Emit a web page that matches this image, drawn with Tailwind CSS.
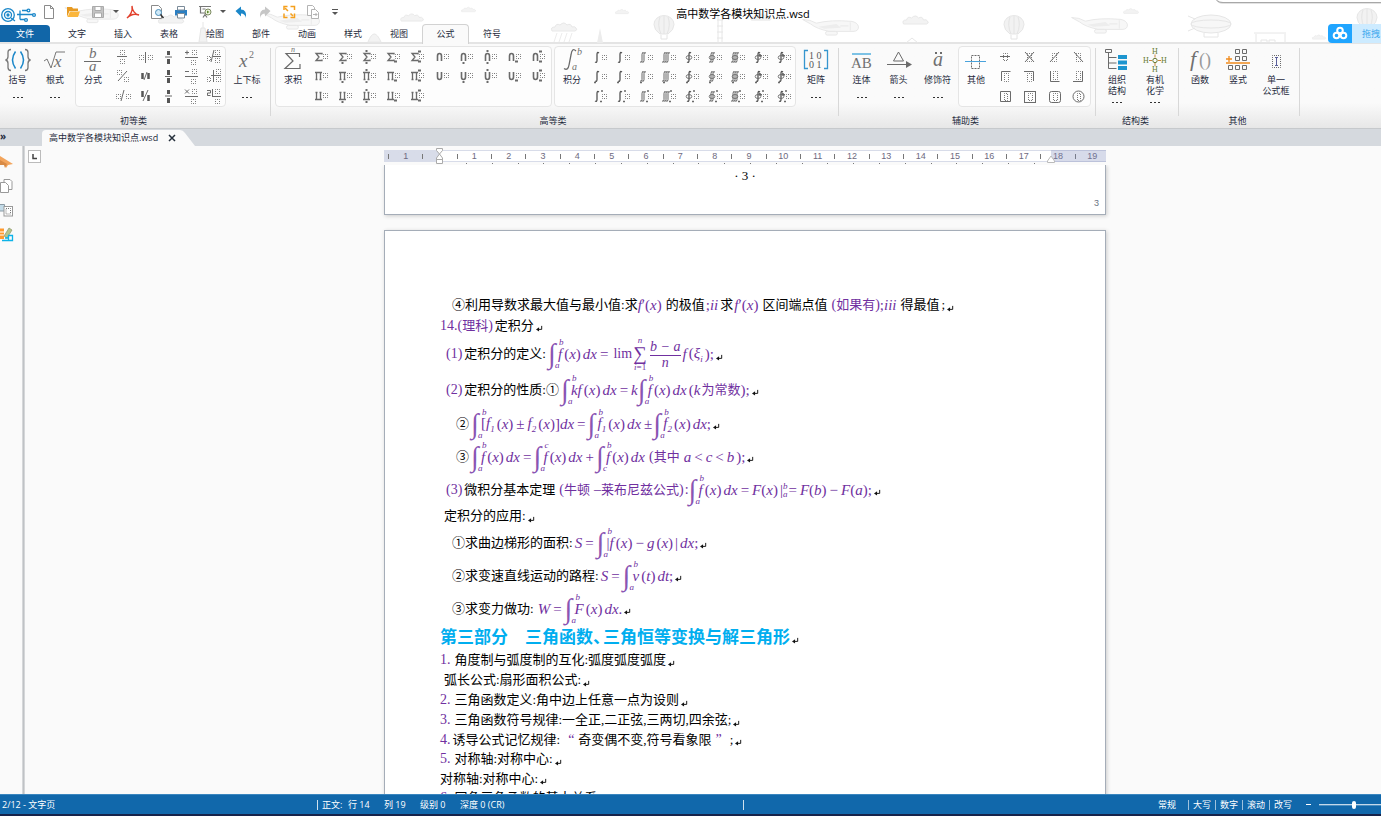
<!DOCTYPE html>
<html lang="zh-CN">
<head>
<meta charset="utf-8">
<title>高中数学各模块知识点.wsd</title>
<script src="https://cdn.jsdelivr.net/npm/@tailwindcss/browser@4"></script>
</head>
<body class="flex h-screen flex-col overflow-hidden bg-[#fafafa] font-['Open_Sans','Noto_Sans_CJK_SC',sans-serif] text-[9px] leading-3 text-[#1f2b3d]">

<svg class="hidden" aria-hidden="true">
  <symbol id="cloud" viewBox="0 0 30 10"><path d="M3 9h23q3-1 1-3q-1-2-4-1q-1-4-5-2q-3-4-7 0q-4-2-5 2q-5 0-3 4z" fill="#f3f3f3" stroke="#e8e8e8"/></symbol>
  <symbol id="plane" viewBox="0 0 64 24"><path d="M1 6l8 1 7 3q16-4 38-2q7 1 8 6q0 5-6 5H30q-14-3-20-8z" fill="#f7f7f7" stroke="#e6e6e6"/><path d="M18 14l20-3 5 4-18 1z" fill="#ededed"/><rect x="26" y="19" width="13" height="4" rx="2" fill="#f7f7f7" stroke="#e6e6e6"/><path d="M53 9v9M42 13h9" stroke="#e8e8e8"/></symbol>
  <symbol id="balloon" viewBox="0 0 22 28"><path d="M7 19Q1 15 1 9.500A10 9 0 0 1 21 9.500Q21 15 15 19z" fill="#f2f2f2" stroke="#e6e6e6"/><path d="M11 1v18M7 2q-3 8 1 17M15 2q3 8-1 17M8 20v4h6v-4" fill="none" stroke="#e4e4e4"/></symbol>
  <symbol id="ret" viewBox="0 0 8 8"><path d="M6.500 1v4H2" fill="none" stroke="#111" stroke-width="1.100"/><path d="M0 5l3.500-2.500v5z" fill="#111"/></symbol>
</svg>

<header class="relative shrink-0 bg-white">
  <svg class="pointer-events-none absolute inset-0 h-[43px] w-full" aria-hidden="true">
    <use href="#plane" x="64" y="2" width="56" height="22"/><use href="#cloud" x="154" y="14" width="34" height="10"/><use href="#plane" x="262" y="8" width="60" height="22"/>
    <path d="M199 42l2-14h4l2 14zM203 22v6" fill="#f3f3f3" stroke="#e6e6e6"/>
    <use href="#cloud" x="396" y="13" width="32" height="9"/><use href="#cloud" x="460" y="5" width="17" height="9"/>
    <path d="M368 42q6-16 13 0z" fill="#f3f3f3" stroke="#e8e8e8"/>
    <use href="#cloud" x="548" y="22" width="32" height="10"/><path d="M557 33l-3 9m8-9l-3 9m8-9l-3 9m8-9l-3 9" stroke="#ececec"/><path d="M600 28l3 15h-6z" fill="#ececec"/>
    <use href="#cloud" x="614" y="7" width="16" height="9"/><use href="#balloon" x="653" y="15" width="22" height="28"/>
    <path d="M718 15v28M722 15v28M717 20h6m-6 6h6m-6 6h6m-6 6h6" stroke="#e6e6e6"/><use href="#cloud" x="744" y="13" width="34" height="8"/>
    <use href="#plane" x="799" y="14" width="64" height="22"/><use href="#cloud" x="899" y="15" width="33" height="10"/><path d="M906 43l6-5 6 5" fill="none" stroke="#e6e6e6"/>
    <use href="#balloon" x="1003" y="15" width="22" height="28"/><use href="#plane" x="1068" y="12" width="64" height="22"/><use href="#cloud" x="1122" y="7" width="18" height="8"/>
    <ellipse cx="1211" cy="24" rx="20" ry="9" fill="#f7f7f7" stroke="#e6e6e6"/><ellipse cx="1211" cy="24" rx="20" ry="4" fill="none" stroke="#e6e6e6"/><path d="M1204 33v4h14v-4M1188 16l7 3M1188 31l7-3" stroke="#e6e6e6" fill="none"/>
    <path d="M1254 33h32M1256 34v9M1285 34v9M1261 40h6v3h-6zM1269 40h6v3h-6z" fill="none" stroke="#e6e6e6"/><use href="#cloud" x="1311" y="33" width="16" height="8"/><use href="#balloon" x="1356" y="8" width="22" height="28"/>
    <path d="M1217 0q1 4 6 4h200v-4z" fill="#e2e2e2"/><path d="M1216 0q2 3 6 3h200v-3z" fill="#a8a8a8"/><path d="M1217 0q2 2 6 2h200v-2z" fill="#fff"/>
  </svg>

  <div class="relative flex h-6 items-center">
    <div id="quick" class="flex w-[346px] items-center"></div>
    <h1 class="mr-[241px] flex-1 pt-1 text-center text-[11px] leading-4 text-black">高中数学各模块知识点.wsd</h1>
  </div>

  <nav class="relative flex h-[18px] items-end">
    <button class="mr-1 h-[17px] w-[50px] rounded-tr-sm bg-[#1166a8] text-white">文件</button>
    <button class="h-[17px] w-[46px]">文字</button>
    <button class="h-[17px] w-[46px]">插入</button>
    <button class="h-[17px] w-[46px]">表格</button>
    <button class="h-[17px] w-[46px]">绘图</button>
    <button class="h-[17px] w-[46px]">部件</button>
    <button class="h-[17px] w-[46px]">动画</button>
    <button class="h-[17px] w-[46px]">样式</button>
    <button class="h-[17px] w-[46px]">视图</button>
    <button class="relative -mb-[2px] h-5 w-[47px] rounded-t-sm border border-b-0 border-[#d2d2d2] bg-[#fafafa] pb-[2px]">公式</button>
    <button class="h-[17px] w-[46px]">符号</button>
    <button class="-mb-px ml-auto flex h-[19px] w-[53px] items-center overflow-hidden rounded-l-sm bg-[#cdebff] text-[#3fa9ee]">
      <svg class="h-[19px] w-6 shrink-0 bg-[#20a5ff]" viewBox="0 0 24 19" fill="none" stroke="#fff" stroke-width="2"><circle cx="12" cy="6.500" r="2.800"/><circle cx="8.500" cy="11.500" r="2.800"/><circle cx="15.500" cy="11.500" r="2.800"/></svg>
      <span class="ml-2.5 whitespace-nowrap">拖拽</span>
    </button>
  </nav>
</header>

<section id="ribbon" aria-label="公式" class="flex h-[86px] shrink-0 overflow-hidden border-t-2 border-[#e4e4e4] bg-linear-to-b from-[#fafafa] from-70% to-[#e7e7e7]"></section>

<div class="flex h-[18px] shrink-0 items-end border-t border-[#c6c9cc] bg-[#d5d9de]">
  <button class="mb-[5px] w-[42px] text-left text-[10px] leading-[10px] font-bold" aria-label="展开">»</button>
  <div class="flex h-4 items-center rounded-tl-sm bg-[#fafafa] pl-[7px]">
    <span>高中数学各模块知识点.wsd</span>
    <button class="ml-2.5 mr-1" aria-label="关闭"><svg class="size-2" viewBox="0 0 8 8" stroke="#26303c" stroke-width="1.500"><path d="M1 1l6 6M7 1l-6 6"/></svg></button>
  </div>
  <svg class="h-4 w-4" viewBox="0 0 16 16"><path d="M0 0q3 0 5 3l10 13H0z" fill="#fafafa"/></svg>
</div>

<main class="flex min-h-0 flex-1">
  <aside class="flex w-[22px] shrink-0 flex-col items-start gap-[8px] pt-2" aria-label="面板">
    <button aria-label="导航"><svg class="h-4 w-3.5" viewBox="0 0 14 16"><path d="M0 2l13 8-5 1-2 3-1-3H0z" fill="#f2a45c"/><path d="M0 6l7 4-2 4-1-3H0" fill="#d88a45"/></svg></button>
    <button aria-label="页面"><svg class="h-4 w-3.5" viewBox="0 0 14 16" fill="#fff" stroke="#999"><path d="M4 1.500h6l2 2v8H4z"/><path d="M.5 4.500h5l3 3v7h-8z"/></svg></button>
    <button aria-label="对象"><svg class="h-4 w-3.5" viewBox="0 0 14 16"><path d="M0 2.500h4.500V9H0" fill="#c3dbe8" stroke="#8a9aa5"/><rect x="4" y="4.500" width="8.500" height="9.500" fill="#fff" stroke="#999"/><rect x="6" y="6.500" width="4.500" height="5.500" fill="none" stroke="#777" stroke-dasharray="1 1"/></svg></button>
    <button aria-label="素材"><svg class="h-4 w-3.5" viewBox="0 0 14 16"><path d="M0 2.500h4V13H0" fill="#ff9a2e"/><path d="M0 6h4M0 9h4" stroke="#fff"/><path d="M4 10l5-8 3 2-5 8z" fill="#b8c48c" stroke="#8d9a6a" stroke-width=".7"/><path d="M2 14.500h10.500v-5h-4v5M5 12h3" fill="none" stroke="#0db3e8" stroke-width="1.300"/></svg></button>
  </aside>
  <div class="w-[3px] shrink-0 border-x border-[#d5d7d9] bg-[#bfc2c5]"></div>

  <div class="flex min-w-0 flex-1 flex-col">
    <div class="relative flex h-[19px] shrink-0 justify-center pl-[84px]">
      <button class="absolute left-[3px] top-1 size-[13px] border border-[#bbb] bg-white" aria-label="制表位"><svg viewBox="0 0 11 11"><path d="M4 3v4.500h4" fill="none" stroke="#444" stroke-width="1.500"/></svg></button>
      <div class="relative w-[722px] pt-1">
        <div class="flex h-[12px] overflow-hidden bg-linear-to-r from-[#d8dce9] from-[55px] to-white to-[55px]">
          <div class="flex h-full w-full border-y border-[#d8dce9]">
            <div id="ruler" class="ml-1 grid w-[721px] shrink-0 grid-cols-21 font-['Liberation_Sans',sans-serif] text-[9px] text-[#6e6a80]"></div>
          </div>
        </div>
        <div class="absolute right-0 top-1 h-[12px] w-[55px] bg-[#7c87b8]/30"></div>
        <svg class="absolute left-[51px] top-[2px] h-[17px] w-[10px]" viewBox="0 0 10 17" fill="#fff" stroke="#aaa"><path d="M1.500 .500h6v2L4.500 6l-3-3.500zM4.500 6l3 4v5.500h-6V10zM1.500 11.500h6"/></svg>
        <svg class="absolute right-[51px] top-[9px] size-2" viewBox="0 0 8 8" fill="#fff" stroke="#bbb"><path d="M.5 6L4 1l3.500 5v1.500h-7z"/></svg>
        <div id="dots" class="ml-[82px] mt-px flex w-[569px] justify-between"></div>
      </div>
    </div>

    <div class="flex min-h-0 flex-1 flex-col items-center overflow-hidden pl-[84px]">
      <div class="flex h-[50px] w-[722px] shrink-0 flex-col border border-t-0 border-[#a5adb8] bg-white shadow-[1px_1px_4px_#00000030]">
        <div class="pt-[3px] text-center font-['Liberation_Serif',serif] text-[13px] leading-4 text-black">· 3 ·</div>
        <div class="mt-[13px] pr-1.5 text-right font-['Liberation_Sans',sans-serif] text-[9px] text-gray-500">3</div>
      </div>
      <article id="page" class="mt-[15px] flex w-[722px] shrink-0 flex-col border border-[#a5adb8] bg-white px-[55px] pt-16 pb-16 font-['Liberation_Serif','Noto_Sans_CJK_SC',serif] text-[14px] leading-5 whitespace-nowrap text-black shadow-[1px_1px_4px_#00000030]"></article>
    </div>
  </div>
</main>

<footer class="flex h-[22px] shrink-0 items-center overflow-hidden border-t border-b-2 border-t-[#3a86bf] border-b-[#16234a] bg-[#1168ab] pl-0.5 whitespace-nowrap text-white">
  <span class="w-[315px]">2/12 - 文字页</span>
  <span class="mr-1 h-2.5 w-px bg-white/80"></span>
  <span class="w-[26px]">正文:</span>
  <span class="w-9">行 14</span>
  <span class="w-9">列 19</span>
  <span class="w-10">级别 0</span>
  <span>深度 0 (CR)</span>
  <span class="ml-[239px] h-2.5 w-px bg-white/80"></span>
  <button class="ml-auto mr-3">常规</button>
  <button class="mr-1 border-l border-white/60 pl-1 leading-[10px]">大写</button>
  <button class="mr-1 border-l border-white/60 pl-1 leading-[10px]">数字</button>
  <button class="mr-1 border-l border-white/60 pl-1 leading-[10px]">滚动</button>
  <button class="border-l border-white/60 pl-1 leading-[10px]">改写</button>
  <button class="ml-3.5 h-px w-[5px] bg-white" aria-label="缩小"></button>
  <input type="range" aria-label="缩放" class="ml-2 -mr-2 h-2 w-[70px] appearance-none bg-linear-to-b from-transparent from-[3px] via-white via-[3px] to-transparent to-[5px] [&::-webkit-slider-thumb]:h-2 [&::-webkit-slider-thumb]:w-1 [&::-webkit-slider-thumb]:appearance-none [&::-webkit-slider-thumb]:rounded-full [&::-webkit-slider-thumb]:bg-white">
</footer>

<script>
const svg = (w, h, body) => `<svg width="${w}" height="${h}" viewBox="0 0 ${w} ${h}" fill="none" stroke="#6b6b6b" overflow="visible">${body}</svg>`;

/* ---------- quick access ---------- */
const quick = [
  ['标志', 38, svg(38, 18, '<g stroke="#1b87c9" stroke-width="1.300"><circle cx="8" cy="9" r="6.300"/><circle cx="8" cy="9" r="3.500"/><circle cx="8" cy="9" r="1" fill="#1b87c9"/><path d="M11 12l4 3M17 8.500h16M22 4.500h5M20 4.500v9M20 13.500h5"/><circle cx="28.500" cy="4.500" r="1.400"/><circle cx="34" cy="9" r="1.400"/><circle cx="26" cy="14" r="1.400"/></g>')],
  ['新建', 22, svg(16, 16, '<path d="M3.500 1.500h6l3 3v10h-9zM9.500 1.500v3h3" fill="#fff" stroke="#8b8b8b"/>')],
  ['打开', 26, svg(16, 16, '<path d="M2 3h5l1 1.500h5V7H4.500L2 13z" fill="#e79a22" stroke="none"/><path d="M5 7.500h10L13 13H2.500z" fill="#fbb63c" stroke="none"/>')],
  ['保存', 24, svg(16, 16, '<path d="M2.500 2.500h11v11h-11z" fill="#c4c4c4" stroke="#aaa"/><path d="M5 2.500h6v4H5zM4.500 9h7v4.500h-7z" fill="#fff" stroke="#aaa"/>')],
  ['保存选项', 12, svg(8, 8, '<path d="M1 2h6L4 5z" fill="#555" stroke="none"/>')],
  ['导出PDF', 22, svg(16, 16, '<path d="M2 14C5 12 8 7 7 2C7 6 10 10.500 14 11C10 9.500 6 10 2 14z" stroke="#e2402c" stroke-width="1.400"/>')],
  ['预览', 26, svg(16, 16, '<path d="M2.500 1.500h7l3 3v10h-10z" fill="#fff" stroke="#8b8b8b"/><circle cx="9.500" cy="8.500" r="3" fill="#cfe9f8" stroke="#4a8db8"/><path d="M11.500 10.500l3 3.500" stroke="#333" stroke-width="1.500"/>')],
  ['打印', 22, svg(16, 16, '<path d="M2 6h12v5.500H2z" fill="#2b7fc2" stroke="none"/><path d="M4.500 2.500h7V6h-7zM4.500 9.500h7v4.500h-7z" fill="#fff" stroke="#7b8b99"/>')],
  ['放映', 26, svg(16, 16, '<path d="M2 2.500h12M3.500 3v6h6M6 13.500l2-3 2 3M5.500 5h3" stroke="#777" stroke-width="1.200"/><circle cx="11" cy="8" r="3" fill="#eef5e0" stroke="#7d8b62"/><path d="M10 6.500l2.500 1.500-2.500 1.500z" fill="#5f8a2f" stroke="none"/>')],
  ['放映选项', 10, svg(8, 8, '<path d="M1 2h6L4 5z" fill="#555" stroke="none"/>')],
  ['撤销', 26, svg(16, 16, '<path d="M2.500 7l5.500-4.500v3q6 0 5 8.500q-1-4.500-5-4.500v3z" fill="#1b87c9" stroke="none"/>')],
  ['重做', 22, svg(16, 16, '<path d="M13.500 7L8 2.500v3q-6 0-5 8.500q1-4.500 5-4.500v3z" fill="#c6c6c6" stroke="none"/>')],
  ['全屏', 26, svg(16, 16, '<path d="M3 6V2.500h3.500M9.500 2.500h4V6M13.500 9.500v4h-4M6.500 13.500H3V9.500" stroke="#f5a01d" stroke-width="1.500"/><path d="M4 4l3 3M12 12L9.500 9.500" stroke="#f5a01d" stroke-width="1.500"/>')],
  ['复制', 22, svg(16, 16, '<path d="M2.500 1.500h5l2 2v8h-7z" fill="#fff" stroke="#b3b3b3"/><path d="M6.500 5.500h4l3 3v6h-7z" fill="#fff" stroke="#b3b3b3"/><path d="M8 10.500h4M10.500 9l1.500 1.500-1.500 1.500" stroke="#b3b3b3"/>')],
  ['更多', 22, svg(8, 8, '<path d="M1 1.500h6" stroke="#555"/><path d="M1 4h6L4 7z" fill="#555" stroke="none"/>')],
];
document.getElementById('quick').innerHTML = quick.map(([n, w, s], i) =>
  `<button aria-label="${n}" class="${i ? 'flex h-4 shrink-0 items-center justify-center' : 'mt-1.5 flex shrink-0 items-center'}" style="width:${w}px">${s}</button>`).join('');

/* ---------- ribbon ---------- */
const box = (x, y, w = 4, h = 4) => `<rect x="${x}.5" y="${y}.5" width="${w}" height="${h}" stroke="#777" stroke-dasharray="1 1" stroke-dashoffset=".5"/>`;
const small = b => svg(18, 16, b);
const glyph = {
  sum: '<path d="M9 5.500V4.500H3L6 8l-3 3.500h6v-1" stroke-width="1.300"/>',
  prod: '<path d="M2 4.500h7M2.500 11.500h2M6.500 11.500h2M3.500 4v7M7.500 4v7" stroke-width="1.300"/>',
  coprod: '<path d="M2 11.500h7M2.500 4.500h2M6.500 4.500h2M3.500 4v7M7.500 4v7" stroke-width="1.300"/>',
  cap: '<path d="M3.500 12V7q0-2.500 2-2.500t2 2.500v5" stroke-width="1.600"/>',
  cup: '<path d="M3.500 4v5q0 2.500 2 2.500t2-2.500V4" stroke-width="1.600"/>',
};
const big = (g, v) => small(glyph[g] + box(10, 5, 4, 4) +
  (v === 1 || v === 2 ? '<path d="M4.500 14h2" stroke-width="2"/>' : '') + (v === 2 ? '<path d="M4.500 2h2" stroke-width="2"/>' : '') +
  (v >= 3 ? '<path d="M9 12.500h3" stroke-width="2"/>' : '') + (v === 4 ? '<path d="M9 2.500h3" stroke-width="2"/>' : ''));
const integral = (n, ring, v) => {
  let s = '';
  for (let i = 0; i < n; i++) s += `<path d="M${9 + i * 2 - n} 4q-2-1.500-2 1.500v6q0 2.500-2 1.500" stroke="#555" stroke-width="${n > 1 ? 0.9 : 1.3}"/>`;
  if (ring) s += '<ellipse cx="6" cy="8.500" rx="2.800" ry="2" stroke-width=".9"/>';
  if (ring > 1) s += '<path d="M7.500 5l2.500 2h-3z" fill="#555"/>';
  return small(s + box(11, 6, 4, 4) + (v === 1 ? '<path d="M3 14.500h2" stroke-width="1.500"/>' : '') + (v === 2 ? '<path d="M9 13.500h2M10 3h2" stroke-width="1.300"/>' : ''));
};
const frac = [
  small(box(7, 1, 4, 4) + box(7, 10, 4, 4) + '<path d="M4 7.500h10"/>'), small(box(3, 6, 4, 4) + box(12, 6, 4, 4) + '<path d="M9.500 3v11"/>'),
  small('<path d="M9.500 2v4M9.500 10v5" stroke="#555" stroke-width="3"/><path d="M6 8h7"/>'),
  small('<path d="M3 3.500h4M5 1.500v4M3 8.500h13"/>' + box(10, 1, 4, 4) + box(9, 11, 4, 4)), small(box(2, 7, 3, 4) + box(10, 1, 4, 4) + box(10, 9, 4, 4) + '<path d="M6 13l3-12M8 7.500h8"/>'),
  small(box(4, 2, 4, 4) + box(11, 9, 4, 4) + '<path d="M5 13L14 3"/>'), small('<path d="M6.500 5v6M12.500 5v6" stroke="#555" stroke-width="2.500"/><path d="M8 12l3-8"/>'),
  small('<path d="M9.500 2v5M9.500 10v5" stroke="#555" stroke-width="3"/><path d="M6 8.500h7"/>'),
  small('<path d="M3 3.500h4M3 8.500h13"/>' + box(10, 1, 4, 4) + box(9, 11, 4, 4)), small(box(2, 9, 3, 4) + box(11, 1, 4, 4) + box(11, 9, 4, 4) + '<path d="M8.500 2v12M6 7.500h10"/>'),
  small(box(3, 6, 4, 4) + box(13, 6, 4, 4) + '<path d="M8 13l3-11"/>'), small('<path d="M6.500 3v6M12.500 7v6" stroke="#555" stroke-width="2.500"/><path d="M7 13l5-11"/>'),
  small('<path d="M9.500 2v4M9.500 10v5" stroke="#555" stroke-width="3"/><path d="M6 8h7"/>'),
  small('<path d="M3 1.500l4 4M7 1.500l-4 4M3 8.500h13"/>' + box(10, 1, 4, 4) + box(9, 11, 4, 4)), small('<path d="M2 2.500h3.500v2.500H2.500V7.500h3M7.500 1v7M7 8.500h9"/>' + box(10, 1, 4, 4) + box(10, 11, 4, 4)),
];
const seq = (n, f) => Array.from({ length: n }, (_, i) => f(i));
const bigOps = [...seq(5, i => big('sum', i)), ...seq(5, i => big('cap', i)), ...seq(5, i => big('prod', i)), ...seq(5, i => big('cup', i)), ...seq(5, i => big('coprod', i))];
const ints = seq(3, v => [[1, 0], [1, 0], [2, 0], [3, 0], [1, 1], [2, 1], [3, 1], [1, 2], [1, 2]].map(([n, r]) => integral(n, r, v))).flat();
const others = [
  small(box(7, 4, 4, 7) + '<path d="M4 7.500h10"/>'), small(box(7, 4, 4, 8) + '<path d="M5 3l9 10M14 3L5 13"/>'), small(box(7, 4, 4, 8) + '<path d="M14 3L5 13"/>'), small(box(7, 4, 4, 8) + '<path d="M5 3l9 10"/>'),
  small(box(8, 5, 4, 8) + '<path d="M5.500 13V3.500h9"/>'), small(box(7, 5, 4, 8) + '<path d="M4 3.500h9.500V13"/>'), small(box(8, 3, 4, 8) + '<path d="M5.500 3v10.500h9"/>'), small(box(7, 3, 4, 8) + '<path d="M4 13.500h9.500V3"/>'),
  small(box(8, 5, 3, 7) + '<path d="M4.500 3.500h10v10h-10z"/>'), small(box(8, 5, 4, 7) + '<rect x="4.500" y="3.500" width="11" height="11"/>'), small(box(8, 5, 4, 7) + '<rect x="4.500" y="3.500" width="11" height="11" rx="2"/>'), small(box(8, 5, 3, 7) + '<circle cx="9.500" cy="8.500" r="5.500"/>'),
];
const ser = (x, y, s, t, c = '#707070', extra = 'font-style="italic"') => `<text x="${x}" y="${y}" font-family="Liberation Serif" font-size="${s}" fill="${c}" stroke="none" ${extra}>${t}</text>`;
const up = '';
const icons = {
  '括号': svg(26, 28, '<path d="M6 3.500q-3 0-3 3v4q0 3-2.500 3.500q2.500.5 2.500 3.500v4q0 3 3 3M20 3.500q3 0 3 3v4q0 3 2.500 3.500q-2.500.5-2.500 3.500v4q0 3-3 3" stroke="#777" stroke-width="1.300"/><path d="M10.500 5.500q-6 8.500 0 17M15.500 5.500q6 8.500 0 17" stroke="#1b87c9" stroke-width="1.500"/>'),
  '根式': svg(26, 28, '<path d="M2 15l3-2 4 9 5-16h9" stroke="#777"/>' + ser(12, 21, 17, 'x')),
  '分式': svg(26, 28, ser(9, 12, 15, 'b') + '<path d="M4 15.500h17"/>' + ser(9, 25, 15, 'a')),
  '上下标': svg(26, 28, ser(5, 21, 19, 'x') + ser(15, 12, 10, '2', '#707070', up)),
  '求积': svg(26, 28, '<path d="M19.500 11V7.500H6l7 7.500-8 7.500h15V18" stroke-width="1.200"/>' + ser(11, 6, 8, 'n')),
  '积分': svg(26, 28, '<path d="M17 5q-4-4-5 4l-2 10q-1 6-5 3.500" stroke-width="1.300"/>' + ser(18, 9, 10, 'b') + ser(13, 24, 10, 'a')),
  '矩阵': svg(26, 28, '<path d="M5 4.500H1.500v18H5M21 4.500h3.500v18H21" stroke="#3596cf" stroke-width="1.300"/>' + ser(6, 13, 10, '1 0', '#555', up) + ser(6, 22, 10, '0 1', '#555', up)),
  '连体': svg(26, 28, '<path d="M3 8h19" stroke="#5db4e0" stroke-width="1.600"/>' + ser(2, 22, 15, 'AB', '#707070', up)),
  '箭头': svg(26, 28, '<path d="M12.500 6l-5 9h10z"/><path d="M1 18.500h20"/><path d="M20 15l6 3.500-6 3.500z" fill="#6b6b6b" stroke="none"/>'),
  '修饰符': svg(26, 28, ser(8, 20, 20, 'a') + '<path d="M10 7h2M15 7h2" stroke-width="2"/>'),
  '其他': svg(26, 28, '<rect x="8.500" y="9.500" width="8" height="13" stroke-dasharray="2 1"/><path d="M2 15.500h21" stroke="#4aa3dc"/>'),
  '组织<br>结构': svg(26, 28, '<path d="M1.500 3.500h6v3h-6zM4.500 7v15.500h8M4.500 11.500h8M4.500 17h8"/><path d="M14 9h9v4h-9zM14 14.500h9v4h-9zM14 20h9v4h-9z" fill="#1c95cf" stroke="none"/>'),
  '有机<br>化学': svg(26, 28, ser(10, 8, 8, 'H', '#667b32', up) + ser(1, 17, 8, 'H', '#667b32', up) + ser(19, 17, 8, 'H', '#667b32', up) + ser(10, 26, 8, 'H', '#667b32', up) + '<path d="M7 14.500h3M16 14.500h3M13 8.500v3M13 17v3" stroke="#c9843a"/><circle cx="13" cy="14.500" r="2.200" stroke="#667b32"/>'),
  '函数': svg(26, 28, ser(3, 20, 22, 'f') + ser(12, 20, 18, '()', '#999', up)),
  '竖式': svg(26, 28, '<path d="M10.500 3.500h4v4h-4zM17.500 3.500h4v4h-4zM10.500 10.500h4v4h-4zM17.500 10.500h4v4h-4zM3.500 19.500h4v4h-4zM10.500 19.500h4v4h-4zM17.500 19.500h4v4h-4z"/><path d="M1 13h6M4 10v6M1 17h24" stroke="#f08a1d" stroke-width="1.300"/>'),
  '单一<br>公式框': svg(26, 28, '<rect x="9.500" y="9.500" width="8" height="12" stroke-dasharray="1 1" stroke-dashoffset=".5"/><path d="M12 11.500h3M12 19.500h3M13.500 11.500v8" stroke="#5a5f9a"/>'),
};
const btn = (label, w, dots = 1) => `<button class="flex h-[60px] shrink-0 flex-col items-center" style="width:${w}px"><span class="h-7 shrink-0">${icons[label]}</span><span class="leading-[11px] whitespace-nowrap">${label}</span>${dots ? `<span class="${label.includes('<') ? 'mt-1.5 flex gap-0.5' : 'mt-3 flex gap-0.5'}"><i class="h-px w-[2px] bg-[#333]"></i><i class="h-px w-[2px] bg-[#333]"></i><i class="h-px w-[2px] bg-[#333]"></i></span>` : ''}</button>`;
const cell = (s, i) => `<button class="flex items-center justify-center" aria-label="模板 ${i + 1}">${s}</button>`;
const frame = (lead, cols, w, body) => `<div class="flex h-[61px] shrink-0 rounded-sm border border-[#e5e5e5] bg-[#fdfdfd]" style="width:${w}px"><div class="-mt-px">${lead}</div><div class="${cols} grid flex-1 grid-rows-3">${body}</div></div>`;
const group = (name, w, body) => `<div class="relative flex shrink-0 flex-col" style="width:${w}px"><div class="flex h-[67px] pt-0.5">${body}</div><div class="pt-1 pr-1 text-center leading-3">${name}</div><div class="absolute right-0 top-1 h-[68px] w-px bg-[#d8d8d8]"></div></div>`;
const fracFrame = frame(btn('分式', 34, 0), 'grid-cols-5', 151, frac.map(cell).join(''));
const opFrame = frame(btn('求积', 34, 0), 'grid-cols-10', 277, bigOps.map(cell).join(''));
const intFrame = frame(btn('积分', 34, 0), 'grid-cols-9', 242, ints.map(cell).join(''));
const otherFrame = frame(btn('其他', 34, 0), 'grid-cols-4', 133, others.map(cell).join(''));
document.getElementById('ribbon').innerHTML =
  group('初等类', 271, btn('括号', 35) + btn('根式', 40) + fracFrame + btn('上下标', 42)) +
  group('高等类', 568, '<div class="w-1"></div>' + opFrame + '<div class="w-0.5"></div>' + intFrame + btn('矩阵', 40)) +
  group('辅助类', 257, '<div class="w-1"></div>' + btn('连体', 37) + btn('箭头', 37) + btn('修饰符', 41) + otherFrame) +
  group('结构类', 83, '<div class="w-0.5"></div>' + btn('组织<br>结构', 38) + btn('有机<br>化学', 38)) +
  group('其他', 121, '<div class="w-0.5"></div>' + btn('函数', 38, 0) + btn('竖式', 38, 0) + btn('单一<br>公式框', 38, 0));

/* ---------- ruler ---------- */
document.getElementById('ruler').innerHTML = seq(21, i => `<div class="flex items-center"><i class="h-[5px] w-px bg-[#777]"></i><span class="flex-1 text-center leading-[10px]">${i === 1 ? '' : Math.abs(i - 1)}</span></div>`).join('');
document.getElementById('dots').innerHTML = seq(23, () => '<i class="h-px w-px bg-[#777]"></i>').join('');

/* ---------- document ---------- */
/* In formulas a space separates atoms and _x sets the subscript x. */
const atom = s => s.replace(/([()\[\];:=+−±|.0-9′]+|&lt;)|_(.)/g, (m, u, sub) => u ? `<span class="not-italic">${u}</span>` : `<span class="relative top-1 text-[9px]">${sub}</span>`);
const M = s => '<span class="flex items-center gap-0.5 text-[15px] text-[#7030a0] italic">' + s.split(' ').map(t => /^([=+−±]|&lt;)$/.test(t) ? `<span class="mx-px not-italic">${t}</span>` : `<span>${atom(t)}</span>`).join('') + '</span>';
const R = s => `<span class="text-[#7030a0]">${s}</span>`;
const C = s => `<span class="text-[13px]">${s}</span>`;
const Z = s => `<span class="text-[13px] text-[#7030a0]">${s}</span>`;
const G = { 1: '<i class="w-px"></i>', 2: '<i class="w-0.5"></i>', 4: '<i class="w-1"></i>', 8: '<i class="w-2"></i>', 12: '<i class="w-3"></i>', 16: '<i class="w-4"></i>' };
const E = '<svg class="mt-1.5 ml-0.5 size-[7px]"><use href="#ret"/></svg>';
const I = (a, b) => `<span class="flex h-8 w-2.5 items-center text-[#8a55b3]"><span class="w-2 text-[28px] leading-8">∫</span><span class="flex h-8 w-0.5 flex-col justify-between text-[9px] leading-[9px] text-[#7030a0] italic"><span class="pl-[3px]">${b}</span><span class="-ml-px">${a}</span></span></span>`;
const SUM = '<span class="flex w-4 flex-col items-center text-[9px] leading-[7px] text-[#7030a0] italic"><span>n</span><span class="text-[19px] leading-5 not-italic">∑</span><span class="not-italic"><i>i</i>=1</span></span>';
const FR = '<span class="mx-0.5 flex flex-col text-center text-[14px] leading-[13px] text-[#7030a0] italic"><span class="border-b border-[#7030a0] pb-0.5">b − a</span><span>n</span></span>';
const row = (h, ...p) => `<p class="${h}">${p.join('')}${E}</p>`;
const S = 'flex h-5 items-center', T = 'flex h-[33px] items-center';
document.getElementById('page').innerHTML = [
  row(S, G[12], C('④利用导数求最大值与最小值:'), C('求'), M('f′(x)'), G[4], C('的极值'), G[1], M(';ii'), G[2], C('求'), G[1], M('f′(x)'), G[4], C('区间端点值'), G[4], R('('), Z('如果有'), R(')'), M(';iii'), G[4], C('得最值'), G[2], C(';')),
  row('flex h-[21px] items-center', R('14.('), Z('理科'), R(')'), G[2], C('定积分')),
  row('flex h-9 items-center', G[4], G[2], R('(1)'), G[2], C('定积分的定义:'), G[2], I('a', 'b'), M('f (x) dx ='), G[4], R('lim'), SUM, FR, M('f (ξ_i );')),
  row('flex h-[35px] items-center', G[4], G[2], R('(2)'), G[2], C('定积分的性质:①'), G[2], I('a', 'b'), M('kf (x) dx = k'), I('a', 'b'), M('f (x) dx (k'), G[1], Z('为常数'), M(');')),
  row(T, G[16], C('②'), G[2], I('a', 'b'), M('[f_1 (x) ± f_2 (x)]dx ='), G[1], I('a', 'b'), M('f_1 (x) dx ±'), I('a', 'b'), M('f_2 (x) dx;')),
  row(T, G[16], C('③'), G[2], I('a', 'b'), M('f (x) dx ='), G[1], I('a', 'c'), M('f (x) dx +'), G[1], I('c', 'b'), M('f (x) dx'), G[4], R('('), Z('其中'), G[4], M('a &lt; c &lt; b );')),
  row(T, G[4], G[2], R('(3)'), G[2], C('微积分基本定理'), G[4], R('('), Z('牛顿'), G[4], R('–'), Z('莱布尼兹公式'), R(')'), G[1], R(':'), I('a', 'b'), M('f (x) dx = F(x) |'), '<span class="flex flex-col text-[9px] leading-2 text-[#7030a0] italic"><span>b</span><span>a</span></span>', M('= F(b) − F(a);')),
  row(S, G[4], C('定积分的应用:')),
  row(T, G[12], C('①求曲边梯形的面积:'), G[2], M('S ='), G[2], I('a', 'b'), M('|f (x) − g (x) | dx;')),
  row(T, G[12], C('②求变速直线运动的路程:'), G[2], M('S ='), G[2], I('a', 'b'), M('v (t) dt;')),
  row(T, G[12], C('③求变力做功:'), G[4], M('W ='), G[2], I('a', 'b'), M('F (x) dx.')),
  '<h2 class="flex h-[25px] items-center text-[17px] font-bold text-[#00aeef]">第三部分　三角函数<span class="w-2.5">、</span>三角恒等变换与解三角形' + E + '</h2>',
  row(S, R('1.'), G[4], C('角度制与弧度制的互化:弧度弧度弧度')),
  row(S, G[4], C('弧长公式:扇形面积公式:')),
  row(S, R('2.'), G[4], C('三角函数定义:角中边上任意一点为设则')),
  row(S, R('3.'), G[4], C('三角函数符号规律:一全正,二正弦,三两切,四余弦;')),
  row('flex h-[19px] items-center', R('4.'), G[2], C('诱导公式记忆规律:'), G[8], R('“'), G[4], C('奇变偶不变,符号看象限'), G[4], R('”'), G[8], C(';')),
  row(S, R('5.'), G[4], C('对称轴:对称中心:')),
  row('flex h-[19px] items-center', C('对称轴:对称中心:')),
  row(S, R('6.'), G[4], C('同角三角函数的基本关系')),
].join('');
</script>
</body>
</html>
